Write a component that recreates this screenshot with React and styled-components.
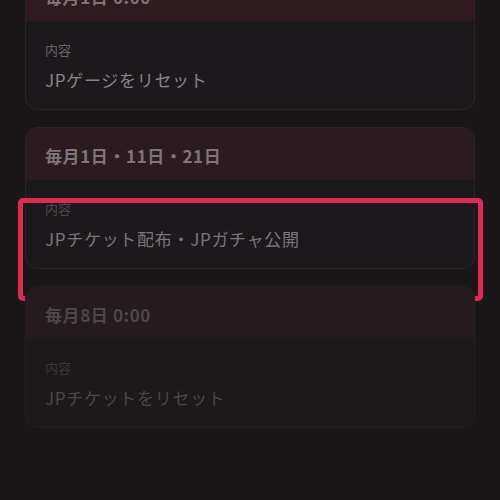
import React from "react";
import styled, { createGlobalStyle } from "styled-components";

const Global = createGlobalStyle`
  html, body { margin: 0; padding: 0; background: #1b1719; }
  body { font-family: "Noto Sans CJK JP", "Noto Sans", sans-serif; overflow: hidden; }
`;

const Page = styled.div`
  width: 500px;
  height: 500px;
  overflow: hidden;
  background: #1b1719;
`;

const List = styled.div`
  display: flex;
  flex-direction: column;
  gap: 17px;
  padding: 0 25px;
  margin-top: -32px;
`;

const Slot = styled.div`
  position: relative;
`;

const Card = styled.div`
  border: 1px solid ${(p) => p.$border};
  border-radius: 12px;
  overflow: hidden;
  background: ${(p) => p.$body};
`;

const Header = styled.div`
  background: ${(p) => p.$bg};
  padding: 18px 19px 14px;
  font-size: 17px;
  line-height: 20px;
  font-weight: 700;
  letter-spacing: 0.6px;
  color: ${(p) => p.$color};
`;

const Body = styled.div`
  padding: 20px 19px 17px;
  display: flex;
  flex-direction: column;
  gap: 9px;
`;

const Label = styled.div`
  font-size: 13px;
  line-height: 18px;
  color: ${(p) => p.$color};
`;

const Value = styled.div`
  font-size: 17px;
  line-height: 24px;
  letter-spacing: 0.7px;
  color: ${(p) => p.$color};
`;

const Highlight = styled.div`
  position: absolute;
  top: 71px;
  left: -7px;
  right: -8px;
  height: 103px;
  box-sizing: border-box;
  border: 5px solid #df2a52;
  border-radius: 5px;
  pointer-events: none;
`;

const cards = [
  {
    title: "毎月1日 0:00",
    value: "JPゲージをリセット",
    header: "#2e1a1f",
    body: "#1c191c",
    border: "#2a2628",
    titleColor: "#7d7578",
    labelColor: "#6a6567",
    valueColor: "#8a8587",
  },
  {
    title: "毎月1日・11日・21日",
    value: "JPチケット配布・JPガチャ公開",
    header: "#2b1a1f",
    body: "#1c191c",
    border: "#292527",
    titleColor: "#7e7679",
    labelColor: "#4d4849",
    valueColor: "#7b7678",
    highlight: true,
  },
  {
    title: "毎月8日 0:00",
    value: "JPチケットをリセット",
    header: "#251a1e",
    body: "#1c191b",
    border: "#242022",
    titleColor: "#4e4749",
    labelColor: "#3b3638",
    valueColor: "#4b4648",
  },
];

export default function App() {
  return (
    <Page>
      <Global />
      <List>
        {cards.map((c) => (
          <Slot key={c.title}>
            <Card $border={c.border} $body={c.body}>
              <Header $bg={c.header} $color={c.titleColor}>
                {c.title}
              </Header>
              <Body>
                <Label $color={c.labelColor}>内容</Label>
                <Value $color={c.valueColor}>{c.value}</Value>
              </Body>
            </Card>
            {c.highlight && <Highlight />}
          </Slot>
        ))}
      </List>
    </Page>
  );
}
